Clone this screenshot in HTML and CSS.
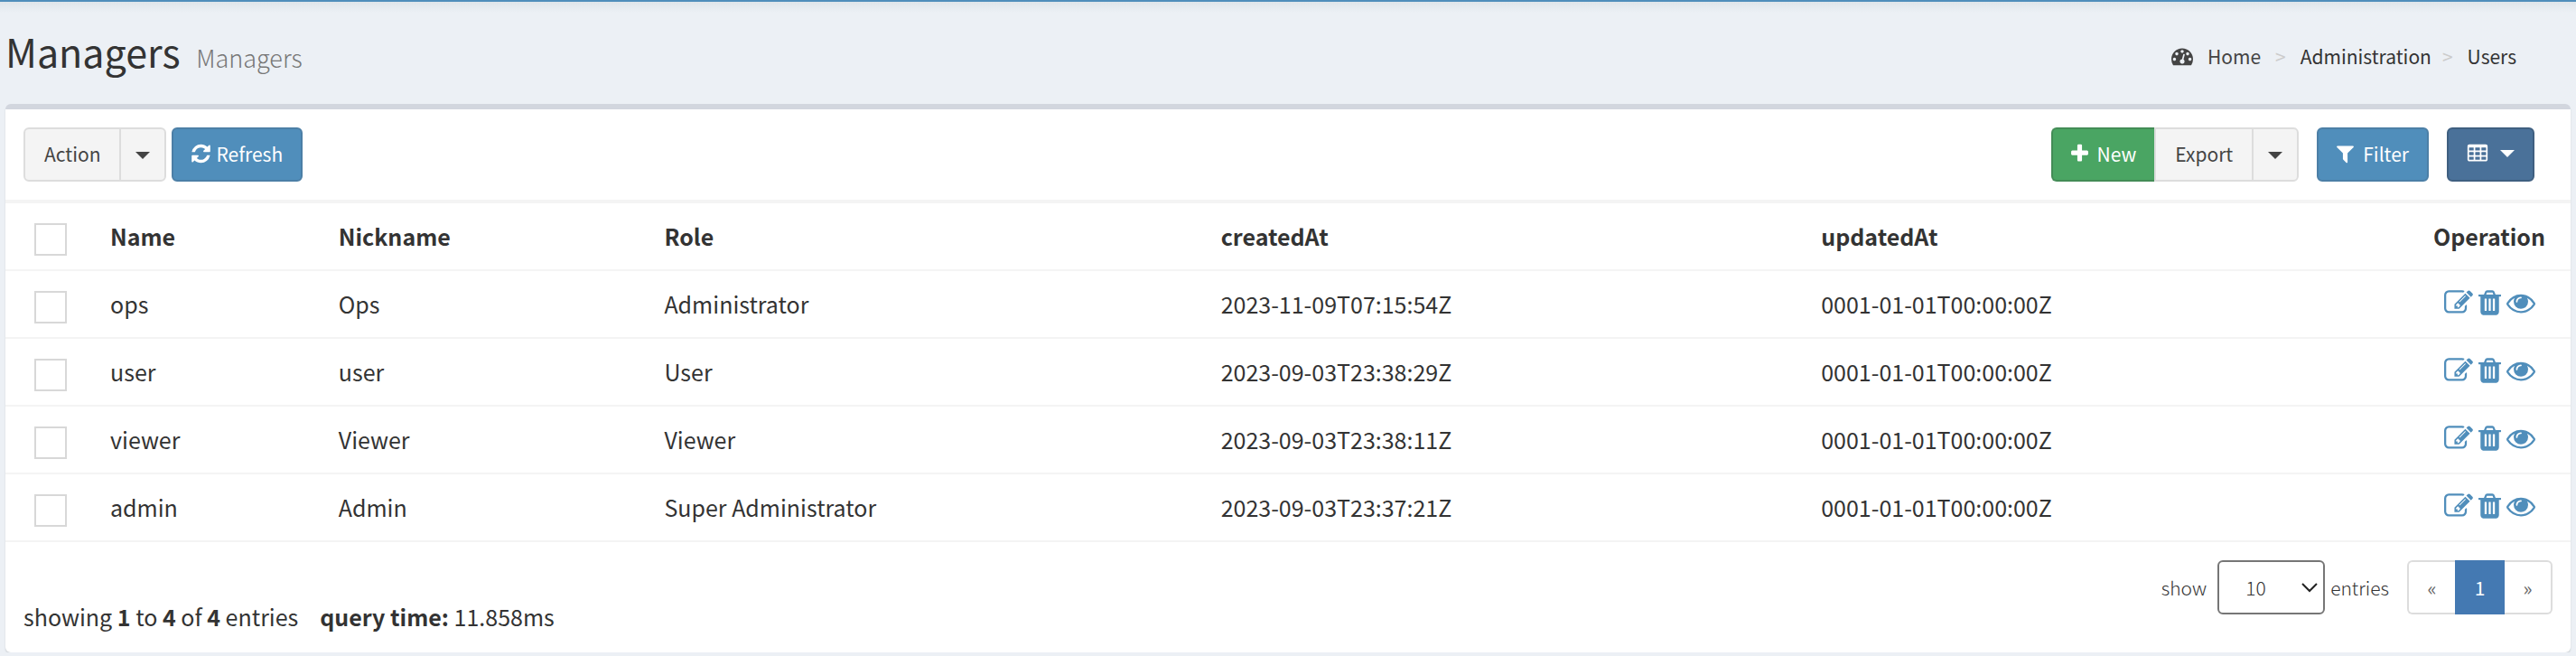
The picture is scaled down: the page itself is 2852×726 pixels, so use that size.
FILE: index.html
```html
<!DOCTYPE html>
<html lang="en">
<head>
<meta charset="utf-8">
<title>Managers</title>
<link rel="stylesheet" href="styles.css">
</head>
<body>
<svg class="sprite" aria-hidden="true">
  <symbol id="i-refresh" viewBox="128 0 1536 1792"><path d="M1639 1056q0 5-1 7-64 268-268 434.5t-478 166.5q-146 0-282.5-55t-243.5-157l-129 129q-19 19-45 19t-45-19-19-45v-448q0-26 19-45t45-19h448q26 0 45 19t19 45-19 45l-137 137q71 66 161 102t187 36q134 0 250-65t186-179q11-17 53-117 8-23 30-23h192q13 0 22.5 9.5t9.5 22.5zm25-800v448q0 26-19 45t-45 19h-448q-26 0-45-19t-19-45 19-45l138-138q-148-137-349-137-134 0-250 65t-186 179q-11 17-53 117-8 23-30 23h-199q-13 0-22.5-9.5t-9.5-22.5v-7q65-268 270-434.5t480-166.5q146 0 284 55.5t245 156.5l130-129q19-19 45-19t45 19 19 45z"/></symbol>
  <symbol id="i-plus" viewBox="192 0 1408 1792"><path d="M1600 736v192q0 40-28 68t-68 28h-416v416q0 40-28 68t-68 28h-192q-40 0-68-28t-28-68v-416h-416q-40 0-68-28t-28-68v-192q0-40 28-68t68-28h416v-416q0-40 28-68t68-28h192q40 0 68 28t28 68v416h416q40 0 68 28t28 68z"/></symbol>
  <symbol id="i-filter" viewBox="192 0 1408 1792"><path d="M1595 295q17 41-14 70l-493 493v742q0 42-39 59-13 5-25 5-27 0-45-19l-256-256q-19-19-19-45v-486l-493-493q-31-29-14-70 17-39 59-39h1280q42 0 59 39z"/></symbol>
  <symbol id="i-table" viewBox="0 0 1792 1792"><path d="M576 1376v-192q0-14-9-23t-23-9h-320q-14 0-23 9t-9 23v192q0 14 9 23t23 9h320q14 0 23-9t9-23zm0-384v-192q0-14-9-23t-23-9h-320q-14 0-23 9t-9 23v192q0 14 9 23t23 9h320q14 0 23-9t9-23zm512 384v-192q0-14-9-23t-23-9h-320q-14 0-23 9t-9 23v192q0 14 9 23t23 9h320q14 0 23-9t9-23zm-512-768v-192q0-14-9-23t-23-9h-320q-14 0-23 9t-9 23v192q0 14 9 23t23 9h320q14 0 23-9t9-23zm512 384v-192q0-14-9-23t-23-9h-320q-14 0-23 9t-9 23v192q0 14 9 23t23 9h320q14 0 23-9t9-23zm512 384v-192q0-14-9-23t-23-9h-320q-14 0-23 9t-9 23v192q0 14 9 23t23 9h320q14 0 23-9t9-23zm-512-768v-192q0-14-9-23t-23-9h-320q-14 0-23 9t-9 23v192q0 14 9 23t23 9h320q14 0 23-9t9-23zm512 384v-192q0-14-9-23t-23-9h-320q-14 0-23 9t-9 23v192q0 14 9 23t23 9h320q14 0 23-9t9-23zm0-384v-192q0-14-9-23t-23-9h-320q-14 0-23 9t-9 23v192q0 14 9 23t23 9h320q14 0 23-9t9-23zm128-320v1088q0 66-47 113t-113 47h-1344q-66 0-113-47t-47-113v-1088q0-66 47-113t113-47h1344q66 0 113 47t47 113z"/></symbol>
  <symbol id="i-dashboard" viewBox="0 0 1792 1792"><path d="M384 1152q0-53-37.5-90.5t-90.5-37.5-90.5 37.5-37.5 90.5 37.5 90.5 90.5 37.5 90.5-37.5 37.5-90.5zm192-448q0-53-37.5-90.5t-90.5-37.5-90.5 37.5-37.5 90.5 37.5 90.5 90.5 37.5 90.5-37.5 37.5-90.5zm428 481l101-382q6-26-7.5-48.5t-38.5-29.5-48 6.5-30 39.5l-101 382q-60 5-107 43.5t-63 98.5q-20 77 20 146t117 89 146-20 89-117q16-60-6-117t-72-91zm660-33q0-53-37.5-90.5t-90.5-37.5-90.5 37.5-37.5 90.5 37.5 90.5 90.5 37.5 90.5-37.5 37.5-90.5zm-640-640q0-53-37.5-90.5t-90.5-37.5-90.5 37.5-37.5 90.5 37.5 90.5 90.5 37.5 90.5-37.5 37.5-90.5zm448 192q0-53-37.5-90.5t-90.5-37.5-90.5 37.5-37.5 90.5 37.5 90.5 90.5 37.5 90.5-37.5 37.5-90.5zm320 448q0 261-141 483-19 29-54 29h-1402q-35 0-54-29-141-221-141-483 0-182 71-348t191-286 286-191 348-71 348 71 286 191 191 286 71 348z"/></symbol>
  <symbol id="i-edit" viewBox="0 0 1792 1792"><path d="M888 1184l116-116-152-152-116 116v56h96v96h56zm440-720q-16-16-33 1l-350 350q-17 17-1 33t33-1l350-350q17-17 1-33zm80 594v190q0 119-84.5 203.5t-203.5 84.5h-832q-119 0-203.5-84.5t-84.5-203.5v-832q0-119 84.5-203.5t203.5-84.5h832q63 0 117 25 15 7 18 23 3 17-9 29l-49 49q-14 14-32 8-23-6-45-6h-832q-66 0-113 47t-47 113v832q0 66 47 113t113 47h832q66 0 113-47t47-113v-126q0-13 9-22l64-64q15-15 35-7t20 29zm-96-738l288 288-672 672h-288v-288zm444 132l-92 92-288-288 92-92q28-28 68-28t68 28l152 152q28 28 28 68t-28 68z"/></symbol>
  <symbol id="i-trash" viewBox="192 0 1408 1792"><path d="M704 1376v-704q0-14-9-23t-23-9h-64q-14 0-23 9t-9 23v704q0 14 9 23t23 9h64q14 0 23-9t9-23zm256 0v-704q0-14-9-23t-23-9h-64q-14 0-23 9t-9 23v704q0 14 9 23t23 9h64q14 0 23-9t9-23zm256 0v-704q0-14-9-23t-23-9h-64q-14 0-23 9t-9 23v704q0 14 9 23t23 9h64q14 0 23-9t9-23zm-544-992h448l-48-117q-7-9-17-11h-317q-10 2-17 11zm928 32v64q0 14-9 23t-23 9h-96v948q0 83-47 143.5t-113 60.5h-832q-66 0-113-58.5t-47-141.5v-952h-96q-14 0-23-9t-9-23v-64q0-14 9-23t23-9h309l70-167q15-37 54-63t79-26h320q40 0 79 26t54 63l70 167h309q14 0 23 9t9 23z"/></symbol>
  <symbol id="i-eye" viewBox="0 0 1792 1792"><path d="M1664 960q-152-236-381-353 61 104 61 225 0 185-131.5 316.5t-316.5 131.5-316.5-131.5-131.5-316.5q0-121 61-225-229 117-381 353 133 205 333.5 326.5t434.5 121.5 434.5-121.5 333.5-326.5zm-720-384q0-20-14-34t-34-14q-125 0-214.5 89.5t-89.5 214.5q0 20 14 34t34 14 34-14 14-34q0-86 61-147t147-61q20 0 34-14t14-34zm848 384q0 34-20 69-140 230-376.5 368.5t-499.5 138.5-499.5-139-376.5-368q-20-35-20-69t20-69q140-229 376.5-368t499.5-139 499.5 139 376.5 368q20 35 20 69z"/></symbol>
</svg>

<header class="page-header">
  <h1 class="page-title">Managers <small class="page-subtitle">Managers</small></h1>
  <nav aria-label="Breadcrumb">
    <ol class="breadcrumb">
      <li><a href="#"><svg class="icon icon-home"><use href="#i-dashboard"/></svg>Home</a></li>
      <li>Administration</li>
      <li>Users</li>
    </ol>
  </nav>
</header>

<main class="box">
  <div class="toolbar">
    <div class="toolbar-left">
      <div class="btn-group">
        <button type="button" class="btn btn-default btn-wide">Action</button>
        <button type="button" class="btn btn-default btn-toggle" aria-label="Action menu"><span class="caret"></span></button>
      </div>
      <button type="button" class="btn btn-primary btn-refresh"><svg class="icon icon-refresh"><use href="#i-refresh"/></svg>Refresh</button>
    </div>
    <div class="toolbar-right">
      <div class="btn-group">
        <button type="button" class="btn btn-success"><svg class="icon icon-narrow"><use href="#i-plus"/></svg>New</button>
        <button type="button" class="btn btn-default btn-wide">Export</button>
        <button type="button" class="btn btn-default btn-toggle" aria-label="Export menu"><span class="caret"></span></button>
      </div>
      <button type="button" class="btn btn-primary btn-filter"><svg class="icon icon-narrow"><use href="#i-filter"/></svg>Filter</button>
      <button type="button" class="btn btn-columns" aria-label="Columns"><svg class="icon icon-table"><use href="#i-table"/></svg><span class="caret"></span></button>
    </div>
  </div>

  <table class="grid">
    <colgroup>
      <col class="col-check"><col class="col-name"><col class="col-nick"><col class="col-role"><col class="col-created"><col class="col-updated"><col class="col-op">
    </colgroup>
    <thead>
      <tr><th class="check"><input type="checkbox" aria-label="Select all"></th><th>Name</th><th>Nickname</th><th>Role</th><th>createdAt</th><th>updatedAt</th><th class="op">Operation</th></tr>
    </thead>
    <tbody>
      <tr><td class="check"><input type="checkbox" aria-label="Select ops"></td><td>ops</td><td>Ops</td><td>Administrator</td><td>2023-11-09T07:15:54Z</td><td>0001-01-01T00:00:00Z</td>
        <td class="op"><div class="actions"><a href="#" aria-label="Edit"><svg class="icon"><use href="#i-edit"/></svg></a><a href="#" aria-label="Delete"><svg class="icon icon-trash"><use href="#i-trash"/></svg></a><a href="#" aria-label="View"><svg class="icon"><use href="#i-eye"/></svg></a></div></td></tr>
      <tr><td class="check"><input type="checkbox" aria-label="Select user"></td><td>user</td><td>user</td><td>User</td><td>2023-09-03T23:38:29Z</td><td>0001-01-01T00:00:00Z</td>
        <td class="op"><div class="actions"><a href="#" aria-label="Edit"><svg class="icon"><use href="#i-edit"/></svg></a><a href="#" aria-label="Delete"><svg class="icon icon-trash"><use href="#i-trash"/></svg></a><a href="#" aria-label="View"><svg class="icon"><use href="#i-eye"/></svg></a></div></td></tr>
      <tr><td class="check"><input type="checkbox" aria-label="Select viewer"></td><td>viewer</td><td>Viewer</td><td>Viewer</td><td>2023-09-03T23:38:11Z</td><td>0001-01-01T00:00:00Z</td>
        <td class="op"><div class="actions"><a href="#" aria-label="Edit"><svg class="icon"><use href="#i-edit"/></svg></a><a href="#" aria-label="Delete"><svg class="icon icon-trash"><use href="#i-trash"/></svg></a><a href="#" aria-label="View"><svg class="icon"><use href="#i-eye"/></svg></a></div></td></tr>
      <tr><td class="check"><input type="checkbox" aria-label="Select admin"></td><td>admin</td><td>Admin</td><td>Super Administrator</td><td>2023-09-03T23:37:21Z</td><td>0001-01-01T00:00:00Z</td>
        <td class="op"><div class="actions"><a href="#" aria-label="Edit"><svg class="icon"><use href="#i-edit"/></svg></a><a href="#" aria-label="Delete"><svg class="icon icon-trash"><use href="#i-trash"/></svg></a><a href="#" aria-label="View"><svg class="icon"><use href="#i-eye"/></svg></a></div></td></tr>
    </tbody>
  </table>

  <footer class="box-footer">
    <div class="summary"><span>showing <b>1</b> to <b>4</b> of <b>4</b> entries</span><span><b>query time:</b> 11.858ms</span></div>
    <div class="paging">
      <div class="page-size">
        <label for="page-size">show</label>
        <span class="select-wrap">
          <select id="page-size"><option>10</option><option>20</option><option>50</option></select>
          <svg class="chevron" viewBox="0 0 18 12"><path d="M1 2l8 8 8-8"/></svg>
        </span>
        <span>entries</span>
      </div>
      <nav class="pagination" aria-label="Pages">
        <a href="#" class="page-prev">«</a>
        <a href="#" class="page-current" aria-current="page">1</a>
        <a href="#" class="page-next">»</a>
      </nav>
    </div>
  </footer>
</main>
</body>
</html>
```

FILE: styles.css
```css
* { box-sizing: border-box; }

body {
  margin: 0;
  background: #ecf0f5;
  color: #333;
  font-family: "Noto Sans CJK SC", "Open Sans", sans-serif;
  font-size: 25px;
  line-height: 36px;
}

a { color: inherit; text-decoration: none; }
.sprite { display: none; }
.icon { display: block; flex: none; width: 32px; height: 32px; fill: currentColor; }

.page-header {
  display: flex;
  justify-content: space-between;
  align-items: flex-start;
  padding: 25px 66px 30px 6px;
  border-top: 2px solid #508ebb;
  background: linear-gradient(#dfe5ea, #ecf0f5 12px);
}
.page-title { margin: 0; font-size: 43px; line-height: 58px; font-weight: 400; }
.page-subtitle { margin-left: 8px; font-size: 27px; line-height: 28px; font-weight: 300; color: #777; }

.breadcrumb {
  display: flex;
  margin: 0;
  padding: 17px 0 0;
  list-style: none;
  font-size: 21px;
  line-height: 36px;
}
.breadcrumb li { display: flex; }
.breadcrumb a { display: flex; align-items: center; padding-right: 4px; color: #444; }
.breadcrumb li + li::before { content: ">"; margin: 0 16px 0 12px; color: #ccc; }
.icon-home { width: 24px; height: 24px; margin-right: 16px; }

.box {
  margin: 0 6px;
  border-top: 6px solid #d2d6de;
  border-radius: 6px;
  background: #fff;
  box-shadow: 0 2px 2px rgba(0, 0, 0, .12);
}

.toolbar {
  display: flex;
  justify-content: space-between;
  padding: 20px 40px 20px 20px;
  border-bottom: 4px solid #f4f4f4;
}
.toolbar-left { display: flex; gap: 6px; }
.toolbar-right { display: flex; gap: 20px; }
.btn-group { display: flex; }

.btn {
  display: flex;
  align-items: center;
  justify-content: center;
  height: 60px;
  padding: 0 20px 2px;
  border: 2px solid #ddd;
  border-radius: 6px;
  font: inherit;
  font-size: 21px;
  line-height: 32px;
  color: #fff;
}
.btn-default { background: #f4f4f4; color: #444; }
.btn-primary { background: #508ebb; border-color: #4c7fa6; }
.btn-success { background: #4aa563; border-color: #438c56; }
.btn-columns { gap: 13px; background: #4a7199; border-color: #3f5f80; }
.btn-toggle { width: 52px; padding: 2px 0 0; }
.btn-wide { padding: 0 21px 2px; }
.btn-refresh { gap: 6px; }
.btn-filter, .btn-success { gap: 10px; }
.btn-success { border-right: 0; }
.btn-group .btn:not(:first-child) { border-top-left-radius: 0; border-bottom-left-radius: 0; }
.btn-group .btn:not(:last-child) { border-top-right-radius: 0; border-bottom-right-radius: 0; }
.btn-group .btn-toggle { margin-left: -2px; }
.icon-refresh { width: 21px; height: 24px; }
.icon-narrow { width: 19px; height: 24px; }
.icon-table { width: 24px; height: 24px; }
.caret {
  border: 8px solid transparent;
  border-top-color: currentColor;
  border-bottom: 0;
}

.grid { width: 100%; border-collapse: collapse; table-layout: fixed; }
.grid tr { height: 75px; border-bottom: 2px solid #f4f4f4; }
.grid thead tr { height: 74px; }
.grid th, .grid td { padding: 0 16px 2px; text-align: left; vertical-align: middle; }
.grid .check { padding: 6px 0 0 32px; }
.grid .op { padding: 0 28px 0 16px; text-align: center; }
.grid th.op { padding: 0 16px 2px 4px; }
.col-check { width: 100px; }
.col-name { width: 8.9%; }
.col-nick { width: 12.7%; }
.col-role { width: 21.7%; }
.col-created { width: 23.4%; }
.col-op { width: 168px; }

input[type="checkbox"] {
  appearance: none;
  display: block;
  width: 36px;
  height: 36px;
  margin: 0;
  border: 2px solid #d8d8d8;
  background: #fff;
}
.actions { display: flex; justify-content: center; gap: 6px; padding-bottom: 4px; color: #508ebb; }
.icon-trash { width: 25px; }

.box-footer {
  display: flex;
  justify-content: space-between;
  align-items: flex-start;
  padding: 20px 20px 42px;
}
.summary { display: flex; gap: 24px; padding-top: 44px; line-height: 36px; height: 60px; }
.paging { display: flex; gap: 20px; }
.page-size { display: flex; align-items: center; font-size: 21px; font-weight: 300; }
.select-wrap { position: relative; margin: 0 6px 0 12px; }
select {
  appearance: none;
  display: block;
  width: 119px;
  height: 60px;
  padding: 0 29px;
  border: 2px solid #767676;
  border-radius: 6px;
  background: #fff;
  color: #333;
  font: inherit;
}
.chevron {
  position: absolute;
  right: 8px;
  top: 24px;
  width: 18px;
  height: 12px;
  fill: none;
  stroke: #222;
  stroke-width: 2;
  pointer-events: none;
}
.pagination { display: flex; font-size: 21px; }
.pagination a {
  display: flex;
  align-items: center;
  justify-content: center;
  width: 53px;
  height: 60px;
  border: 2px solid #ddd;
  color: #666;
}
.pagination .page-prev { border-right: 0; border-radius: 6px 0 0 6px; }
.pagination .page-next { border-left: 0; border-radius: 0 6px 6px 0; }
.pagination .page-current { width: 55px; border-color: #4479b2; background: #4479b2; color: #fff; }
```
